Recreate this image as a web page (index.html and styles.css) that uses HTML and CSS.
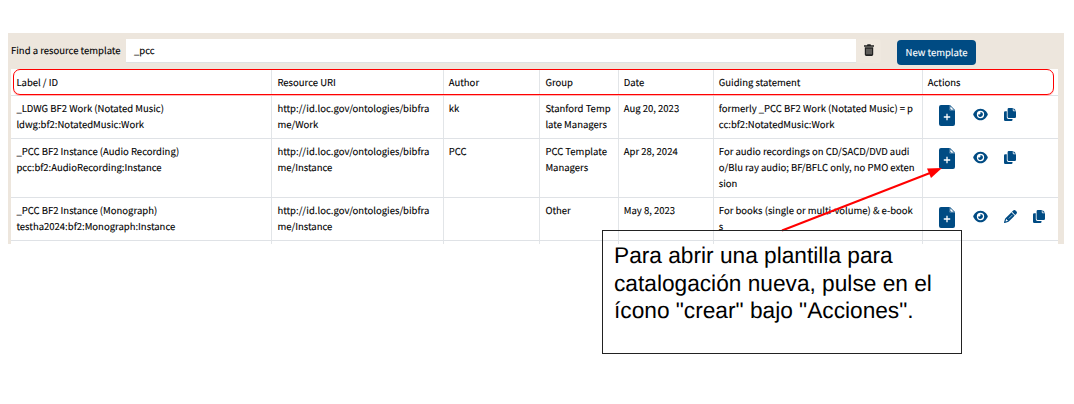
FILE: index.html
```html
<!DOCTYPE html>
<html lang="en">
<head>
<meta charset="utf-8">
<title>Resource templates</title>
<link rel="stylesheet" href="styles.css">
</head>
<body>
<svg class="sprite" aria-hidden="true">
  <symbol id="create" viewBox="0 0 16 21"><path d="M2 0H10.3V4Q10.300 5.600 11.900 5.600H16V19Q16 21 14 21H2Q0 21 0 19V2Q0 0 2 0Z"/><path d="M10.300 0H11L16 5V5.600H11.900Q10.300 5.600 10.300 4Z"/><path d="M11.300 1.300 14.900 4.700H12.300Q11.300 4.700 11.300 3.700Z" fill="#fff"/><path d="M8 8.800V15.200M4.800 12H11.200" fill="none" stroke="#fff" stroke-width="1.3"/></symbol>
  <symbol id="view" viewBox="0 0 576 512"><path d="M288 32c-80.800 0-145.500 36.800-192.600 80.600C48.600 156 17.300 208 2.500 243.700c-3.300 7.900-3.300 16.700 0 24.600C17.300 304 48.600 356 95.400 399.400C142.500 443.200 207.200 480 288 480s145.500-36.800 192.600-80.600c46.800-43.500 78.100-95.400 93-131.100c3.300-7.900 3.300-16.700 0-24.600c-14.900-35.700-46.200-87.700-93-131.100C433.500 68.800 368.800 32 288 32zM144 256a144 144 0 1 1 288 0a144 144 0 1 1-288 0zm144-64c0 35.300-28.700 64-64 64c-7.100 0-13.900-1.200-20.300-3.300c-5.500-1.800-11.900 1.600-11.700 7.400c.3 6.900 1.300 13.800 3.200 20.700c13.700 51.200 66.400 81.600 117.600 67.900s81.600-66.400 67.900-117.600c-11.100-41.500-47.800-69.400-88.600-71.100c-5.800-.2-9.200 6.100-7.400 11.700c2.100 6.400 3.300 13.200 3.300 20.300z"/></symbol>
  <symbol id="copy" viewBox="0 0 12 13"><path d="M4.800 0H8.800V2.300Q8.800 3.200 9.700 3.200H12V8.800Q12 10 10.800 10H4.800Q3.600 10 3.600 8.800V1.200Q3.600 0 4.800 0ZM9.500 0 12 2.500H9.500ZM1.200 3.200H2.800V9.200Q2.800 10.900 4.500 10.900H8.500V11.800Q8.500 13 7.300 13H1.200Q0 13 0 11.800V4.400Q0 3.200 1.200 3.200Z"/></symbol>
  <symbol id="edit" viewBox="0 0 512 512"><path d="M410.300 231l11.300-11.300-33.900-33.900-62.100-62.100-33.900-33.900-11.300 11.300-22.600 22.600L58.600 322.900c-10.400 10.400-18 23.300-22.200 37.400L1 480.700c-2.500 8.400-.2 17.500 6.100 23.700s15.300 8.500 23.700 6.100l120.300-35.400c14.100-4.200 27-11.800 37.400-22.200L387.700 253.700zM160 399.400l-9.100 22.700c-4 3.100-8.500 5.400-13.300 6.900L59.400 452l23-78.100c1.400-4.900 3.800-9.400 6.900-13.300l22.700-9.100v32c0 8.800 7.200 16 16 16zM362.700 18.700 314.300 67.200l33.900 33.900 62.100 62.100 33.900 33.900 48.500-48.500c25-25 25-65.500 0-90.500L453.300 18.700c-25-25-65.500-25-90.500 0z"/><path d="M190 335 332 193" stroke="#fff" stroke-width="24"/></symbol>
</svg>
<main class="stage">
  <section class="panel">
    <form class="search">
      <label class="search-label">Find a resource template</label>
      <div class="search-input">_pcc</div>
      <div class="clear"><svg class="trash" viewBox="0 0 10 12"><path d="M0 1.300H3L3.500.2H6.500L7 1.300H10V2.800H0ZM.8 3.200H9.200V10.600Q9.200 12 7.800 12H2.200Q.8 12 .8 10.600Z"/><path d="M3 4.700V10.300M5 4.700V10.300M7 4.700V10.300" stroke="#ede6dd" stroke-width=".6"/></svg></div>
      <div class="new">New template</div>
    </form>
    <div class="table">
      <div class="row head"><div>Label / ID</div><div>Resource URI</div><div>Author</div><div>Group</div><div>Date</div><div>Guiding statement</div><div>Actions</div></div>
      <div class="row first"><div>_LDWG BF2 Work (Notated Music)<br>ldwg:bf2:NotatedMusic:Work</div><div>http://id.loc.gov/ontologies/bibfra<br>me/Work</div><div>kk</div><div>Stanford Temp<br>late Managers</div><div>Aug 20, 2023</div><div>formerly _PCC BF2 Work (Notated Music) = p<br>cc:bf2:NotatedMusic:Work</div><div class="actions"><svg class="create"><use href="#create"/></svg><svg class="view"><use href="#view"/></svg><svg class="copy"><use href="#copy"/></svg></div></div>
      <div class="row second"><div>_PCC BF2 Instance (Audio Recording)<br>pcc:bf2:AudioRecording:Instance</div><div>http://id.loc.gov/ontologies/bibfra<br>me/Instance</div><div>PCC</div><div>PCC Template<br>Managers</div><div>Apr 28, 2024</div><div>For audio recordings on CD/SACD/DVD audi<br>o/Blu ray audio; BF/BFLC only, no PMO exten<br>sion</div><div class="actions"><svg class="create"><use href="#create"/></svg><svg class="view"><use href="#view"/></svg><svg class="copy"><use href="#copy"/></svg></div></div>
      <div class="row third"><div>_PCC BF2 Instance (Monograph)<br>testha2024:bf2:Monograph:Instance</div><div>http://id.loc.gov/ontologies/bibfra<br>me/Instance</div><div></div><div>Other</div><div>May 8, 2023</div><div>For books (single or multi-volume) &amp; e-book<br>s</div><div class="actions"><svg class="create"><use href="#create"/></svg><svg class="view"><use href="#view"/></svg><svg class="edit"><use href="#edit"/></svg><svg class="copy"><use href="#copy"/></svg></div></div>
      <div class="row rest"><div></div><div></div><div></div><div></div><div></div><div></div><div></div></div>
    </div>
  </section>
  <div class="highlight"></div>
  <svg class="arrow" viewBox="0 0 1074 404"><path d="M782 230.500 930 173" stroke="#f00" stroke-width="2"/><path d="M942 168 927 168.500 931 178Z" fill="#f00"/></svg>
  <div class="callout">Para abrir una plantilla para<br>catalogación nueva, pulse en el<br>ícono "crear" bajo "Acciones".</div>
</main>
</body>
</html>
```
FILE: styles.css
```css
* { box-sizing: border-box; }
body { margin: 0; background: #fff; color: #000; font-family: "Noto Sans CJK JP", "Noto Sans", sans-serif; text-rendering: geometricPrecision; }
.sprite { display: none; }
.stage { position: relative; width: 1074px; height: 404px; overflow: hidden; padding: 33px 10px 0 8px; }
.panel { height: 211px; background: #ede6dd; padding: 6px 6px 0 3px; overflow: hidden; font-size: 9.5px; line-height: 16px; -webkit-text-stroke: .1px; }
.search { display: flex; align-items: flex-start; height: 30px; margin: 0; }
.search-label { width: 115px; padding-top: 3px; white-space: nowrap; }
.search-input { width: 730px; height: 24px; background: #fff; border-bottom: 1px solid #dfe1e2; padding: 3px 8px; }
.clear { width: 25px; height: 24px; display: flex; justify-content: center; padding-top: 5px; border-radius: 3px; background: #efe8df; }
.trash { width: 10px; height: 12px; fill: #222; }
.new { margin: 1px 0 0 16px; width: 79px; height: 25px; border-radius: 4px; background: #004b83; color: #fff; text-align: center; line-height: 24px; white-space: nowrap; }
.table { background: #fff; }
.row { display: grid; grid-template-columns: 261px 172px 96px 79px 95px 209px 135px; border-bottom: 1px solid #dfe2e6; }
.row > div { padding: 4px 0 0 5.4px; border-right: 1px solid #e2e5e8; white-space: nowrap; }
.row > div:nth-child(3), .row > div:nth-child(5), .row > div:nth-child(6), .head > div:last-child { padding-left: 4.8px; }
.row > div:last-child { border-right: 0; }
.head { height: 27px; }
.row.head > div { padding-top: 5px; }
.first { height: 43px; }
.second { height: 59px; }
.third { height: 43px; }
.rest { height: 8px; border: 0; }
.row > .actions { display: flex; align-items: flex-start; padding: 9.4px 0 0 16px; }
.actions svg { fill: #004b83; flex: none; }
.create { width: 16px; height: 21px; }
.view { width: 15px; height: 13px; margin: 2.6px 0 0 18px; }
.copy { width: 12px; height: 13px; margin: 2.6px 0 0 16px; }
.edit { width: 13px; height: 13px; margin: 2.6px 0 0 16px; }
.highlight { position: absolute; left: 13px; top: 69px; width: 1041px; height: 26px; border: 1px solid #f00; border-radius: 7px; box-shadow: 0 1px 0 #ffb5b5; }
.arrow { position: absolute; inset: 0; width: 1074px; height: 404px; }
.callout { position: absolute; left: 602px; top: 230px; width: 360px; height: 124px; border: 1px solid #222; padding: 11px; font: 22.7px/27.5px "Liberation Sans", Arial, sans-serif; white-space: nowrap; }
```
